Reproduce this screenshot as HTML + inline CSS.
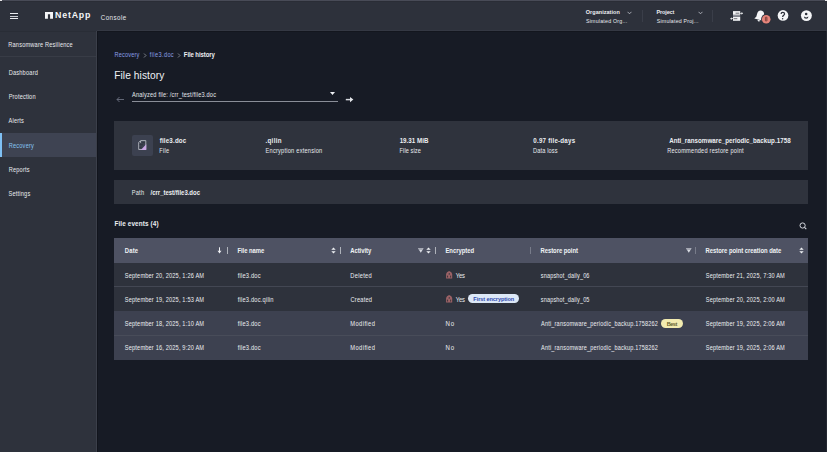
<!DOCTYPE html>
<html><head><meta charset="utf-8">
<style>
*{box-sizing:border-box;margin:0;padding:0}
html,body{width:827px;height:452px;overflow:hidden;background:#171b25;font-family:"Liberation Sans",sans-serif;color:#e6e8ec;position:relative}
.abs{position:absolute}
.t{position:absolute;white-space:nowrap;line-height:1;transform-origin:0 0}
</style></head><body>
<div class="abs" style="left:0px;top:0px;width:827px;height:31px;background:#2d313b;"></div>
<div class="abs" style="left:0px;top:0px;width:827px;height:1px;background:#484b57;"></div>
<div class="abs" style="left:0px;top:1px;width:827px;height:1px;background:#2a2d36;"></div>
<div class="abs" style="left:0px;top:0px;width:2px;height:1px;background:#e6e6e8;"></div>
<div class="abs" style="left:825px;top:0px;width:2px;height:1px;background:#e6e6e8;"></div>
<div class="abs" style="left:0px;top:31px;width:96px;height:421px;background:#2e323c;"></div>
<div class="abs" style="left:0px;top:31px;width:96px;height:1px;background:#292d36;"></div>
<div class="abs" style="left:96px;top:31px;width:1px;height:421px;background:#3b3f4a;"></div>
<div class="abs" style="left:97px;top:30px;width:730px;height:1px;background:#343843;"></div>
<div class="abs" style="left:97px;top:31px;width:1px;height:421px;background:#12151d;"></div>
<div class="abs" style="left:97px;top:31px;width:730px;height:1px;background:#13161e;"></div>
<div class="abs" style="left:826px;top:31px;width:1px;height:421px;background:#232731;"></div>
<div class="abs" style="left:10px;top:13px;width:7.5px;height:1.1px;background:#e8eaee;"></div>
<div class="abs" style="left:10px;top:15.5px;width:7.5px;height:1.0px;background:#c9ccd2;"></div>
<div class="abs" style="left:10px;top:18px;width:7.5px;height:1.1px;background:#e8eaee;"></div>
<svg class="abs" style="left:45px;top:12px" width="8" height="7" viewBox="0 0 8 7"><path d="M0 0H8V6.8H5.1V2.3H2.9V6.8H0Z" fill="#f4f5f7"/></svg>
<svg class="abs" style="left:626.5px;top:10.5px" width="5" height="4" viewBox="0 0 5 4"><path d="M0.5 0.8L2.5 2.8L4.5 0.8" stroke="#c4c8d0" stroke-width="0.8" fill="none"/></svg>
<div class="abs" style="left:642px;top:10px;width:1px;height:12px;background:#3a3e49;"></div>
<svg class="abs" style="left:697.5px;top:10.5px" width="5" height="4" viewBox="0 0 5 4"><path d="M0.5 0.8L2.5 2.8L4.5 0.8" stroke="#c4c8d0" stroke-width="0.8" fill="none"/></svg>
<div class="abs" style="left:712px;top:10px;width:1px;height:12px;background:#3a3e49;"></div>
<svg class="abs" style="left:726px;top:6px" width="20" height="20" viewBox="726 6 20 20">
<rect x="733" y="11.1" width="7.2" height="3.75" fill="#f2f3f5"/>
<rect x="733" y="16.8" width="7.2" height="4" fill="#f2f3f5"/>
<rect x="733" y="14.85" width="7.2" height="1.95" fill="#8d9099"/>
<path d="M735.6 13.2H739.3" stroke="#5d6068" stroke-width="0.9"/>
<path d="M733.7 18.7H737.3" stroke="#5d6068" stroke-width="0.9"/>
<path d="M740.2 12.9H741.5V11.9L743.1 13.3L741.5 14.7V13.7H740.2Z" fill="#f2f3f5"/>
<path d="M733 18.3H731.7V17.3L730.1 18.7L731.7 20.1V19.1H733Z" fill="#f2f3f5"/>
</svg>
<svg class="abs" style="left:750px;top:6px" width="24" height="20" viewBox="750 6 24 20">
<g transform="translate(0.6 0.5) rotate(16 759.5 15.5)"><path d="M759.5 10C757.4 10 756 11.6 756 13.8V17.2L754.6 19.4H764.4L763 17.2V13.8C763 11.6 761.6 10 759.5 10Z" fill="#f4f5f7"/><path d="M758.2 19.9A1.3 1.3 0 0 0 760.8 19.9Z" fill="#f4f5f7"/></g>
<circle cx="766.2" cy="19.2" r="5.1" fill="#2d313b"/>
<circle cx="766.2" cy="19.2" r="4.3" fill="#e5847a"/>
<path d="M765.4 17.2H767V20.9H765.4Z M765.4 19H767" fill="none" stroke="#5e2c2a" stroke-width="0.65"/>
</svg>
<svg class="abs" style="left:774px;top:6px" width="18" height="20" viewBox="774 6 18 20">
<circle cx="783" cy="15.45" r="5.35" fill="#f4f5f7"/>
<path d="M781.1 14.1C781.1 13 781.8 12.4 782.8 12.4C783.9 12.4 784.6 13 784.6 13.9C784.6 15.1 782.6 15.3 782.6 16.9" stroke="#2d313b" stroke-width="1.25" fill="none"/>
<circle cx="782.6" cy="18.8" r="0.75" fill="#2d313b"/>
</svg>
<svg class="abs" style="left:798px;top:6px" width="18" height="20" viewBox="798 6 18 20">
<circle cx="806.4" cy="15.6" r="5.45" fill="#f4f5f7"/>
<circle cx="806.15" cy="14.05" r="1.3" fill="#2d313b"/>
<path d="M803.9 16.6L806.15 17.5L808.4 16.6Q808.5 18.8 806.15 18.8Q803.8 18.8 803.9 16.6Z" fill="#2d313b"/>
</svg>
<div class="abs" style="left:0px;top:56px;width:96px;height:1px;background:#383c46;"></div>
<div class="abs" style="left:0px;top:133px;width:96px;height:24px;background:#3e4352;"></div>
<div class="abs" style="left:0px;top:133px;width:2px;height:24px;background:#7fc0f4;"></div>
<svg class="abs" style="left:143px;top:52.5px" width="4" height="5" viewBox="0 0 4 5"><path d="M1 0.5L3 2.5L1 4.5" stroke="#a6acb6" stroke-width="0.7" fill="none"/></svg>
<svg class="abs" style="left:177px;top:52.5px" width="4" height="5" viewBox="0 0 4 5"><path d="M1 0.5L3 2.5L1 4.5" stroke="#a6acb6" stroke-width="0.7" fill="none"/></svg>
<svg class="abs" style="left:115px;top:96px" width="10" height="7" viewBox="0 0 10 7"><path d="M9 3.5H2M4.5 1L2 3.5L4.5 6" stroke="#6b7180" stroke-width="0.9" fill="none"/></svg>
<div class="abs" style="left:132px;top:101px;width:205.5px;height:1px;background:#8a8e98;"></div>
<svg class="abs" style="left:330px;top:92px" width="5" height="3" viewBox="0 0 5 3"><path d="M0 0H5L2.5 3Z" fill="#eef0f4"/></svg>
<svg class="abs" style="left:344px;top:95px" width="11" height="9" viewBox="344 95 11 9"><path d="M345.8 99.6H350.6" stroke="#d6d9df" stroke-width="1.5"/><path d="M350 96.9L353.4 99.6L350 102.3Z" fill="#e4e6ea"/></svg>
<div class="abs" style="left:114px;top:121px;width:694px;height:49px;background:#2f333d;"></div>
<div class="abs" style="left:132px;top:135px;width:21px;height:21px;background:#3c4150;border-radius:2px;"></div>
<svg class="abs" style="left:136px;top:138px" width="13" height="14" viewBox="136 138 13 14">
<path d="M140.6 140.6H145.8V149.5H138.7V142.5Z" fill="none" stroke="#b6bac2" stroke-width="0.9"/>
<circle cx="140.5" cy="141.9" r="0.65" fill="#e2e5ea"/>
<path d="M142.2 142.7H144.8M139.3 144.7H142.8M139.3 147.3H141.6" stroke="#2a2e3a" stroke-width="0.7"/>
<path d="M146.25 144.2V149.95H140.8Z" fill="#c8a6e4"/>
</svg>
<div class="abs" style="left:114px;top:180px;width:694px;height:24px;background:#2f333d;"></div>
<svg class="abs" style="left:798px;top:221px" width="10" height="10" viewBox="0 0 10 10"><circle cx="4.6" cy="4.5" r="2.6" stroke="#d4d7de" stroke-width="1" fill="none"/><path d="M6.5 6.4L8.3 8.2" stroke="#d4d7de" stroke-width="1.1"/></svg>
<div class="abs" style="left:114px;top:238px;width:694px;height:25px;background:#4e5263;"></div>
<div class="abs" style="left:114px;top:263px;width:694px;height:23px;background:#2e323c;"></div>
<div class="abs" style="left:114px;top:286px;width:694px;height:1px;background:#434753;"></div>
<div class="abs" style="left:114px;top:287px;width:694px;height:24px;background:#2e323c;"></div>
<div class="abs" style="left:114px;top:311px;width:694px;height:24px;background:#3d4150;"></div>
<div class="abs" style="left:114px;top:335px;width:694px;height:1px;background:#484c59;"></div>
<div class="abs" style="left:114px;top:336px;width:694px;height:24px;background:#3d4150;"></div>
<div class="abs" style="left:227px;top:246.5px;width:1px;height:7.5px;background:#aeb2ba;"></div>
<div class="abs" style="left:340px;top:246.5px;width:1px;height:7.5px;background:#aeb2ba;"></div>
<div class="abs" style="left:435px;top:246.5px;width:1px;height:7.5px;background:#aeb2ba;"></div>
<div class="abs" style="left:530px;top:246.5px;width:1px;height:7.5px;background:#787c8a;"></div>
<div class="abs" style="left:695px;top:246.5px;width:1px;height:7.5px;background:#787c8a;"></div>
<svg class="abs" style="left:217px;top:247px" width="5" height="7" viewBox="0 0 5 7"><path d="M2.5 0.3V5" stroke="#f0f2f5" stroke-width="1"/><path d="M0.5 3.8H4.5L2.5 6.6Z" fill="#f0f2f5"/></svg>
<svg class="abs" style="left:330.8px;top:247px" width="5" height="7" viewBox="0 0 5 7"><path d="M0.3 2.8H4.7L2.5 0.4Z M0.3 4.2H4.7L2.5 6.6Z" fill="#f0f2f5"/></svg>
<svg class="abs" style="left:417.5px;top:248px" width="6" height="5" viewBox="0 0 6 5"><path d="M0 0.2H5.6L2.8 4.8Z" fill="#d8dbe2"/><path d="M1 1.2H4.6" stroke="#4e5263" stroke-width="0.5"/></svg>
<svg class="abs" style="left:425.8px;top:247px" width="5" height="7" viewBox="0 0 5 7"><path d="M0.3 2.8H4.7L2.5 0.4Z M0.3 4.2H4.7L2.5 6.6Z" fill="#f0f2f5"/></svg>
<svg class="abs" style="left:685.5px;top:248px" width="6" height="5" viewBox="0 0 6 5"><path d="M0 0.2H5.6L2.8 4.8Z" fill="#d8dbe2"/><path d="M1 1.2H4.6" stroke="#4e5263" stroke-width="0.5"/></svg>
<svg class="abs" style="left:798.8px;top:247px" width="5" height="7" viewBox="0 0 5 7"><path d="M0.3 2.8H4.7L2.5 0.4Z M0.3 4.2H4.7L2.5 6.6Z" fill="#f0f2f5"/></svg>
<svg class="abs" style="left:445px;top:269.5px" width="8" height="9" viewBox="0 0 8 9"><path d="M1.1 4Q1.4 1.9 4.15 0.9Q6.9 1.9 7.2 4V8.6H1.1Z" fill="#9c6266"/><ellipse cx="4.3" cy="3.9" rx="0.8" ry="0.6" fill="#2e323c"/><rect x="2.1" y="5.6" width="1" height="1.9" fill="#3a3238"/><rect x="5.2" y="5.6" width="0.9" height="2" fill="#3a3238"/></svg>
<svg class="abs" style="left:445px;top:293.5px" width="8" height="9" viewBox="0 0 8 9"><path d="M1.1 4Q1.4 1.9 4.15 0.9Q6.9 1.9 7.2 4V8.6H1.1Z" fill="#9c6266"/><ellipse cx="4.3" cy="3.9" rx="0.8" ry="0.6" fill="#2e323c"/><rect x="2.1" y="5.6" width="1" height="1.9" fill="#3a3238"/><rect x="5.2" y="5.6" width="0.9" height="2" fill="#3a3238"/></svg>
<div class="abs" style="left:468.3px;top:294.2px;width:50.6px;height:9.1px;background:#dce8f7;border-radius:4.5px;"></div>
<div class="abs" style="left:661.3px;top:318.65px;width:21.6px;height:9.1px;background:#f2ebb0;border-radius:4.55px;"></div>
<svg class="abs" style="left:0;top:0" width="827" height="452" font-family="Liberation Sans">
<text transform="translate(55.03 18.40) scale(1 1.0)" font-size="8.80" fill="#f4f5f7" font-weight="bold" letter-spacing="0.808">NetApp</text>
<text transform="translate(100.69 19.50) scale(1 1.1770000000000003)" font-size="6.20" fill="#e4e7ec" letter-spacing="0.470">Console</text>
<text transform="translate(585.78 13.80) scale(1 1.1)" font-size="5.50" fill="#eceef2" font-weight="bold" letter-spacing="0.040">Organization</text>
<text transform="translate(585.96 22.70) scale(1 1.1770000000000003)" font-size="5.26" fill="#e8eaef" letter-spacing="0.220">Simulated Org...</text>
<text transform="translate(656.54 13.80) scale(1 1.1)" font-size="5.50" fill="#eceef2" font-weight="bold" letter-spacing="-0.134">Project</text>
<text transform="translate(656.76 22.70) scale(1 1.1770000000000003)" font-size="5.26" fill="#e8eaef" letter-spacing="0.194">Simulated Proj...</text>
<text transform="translate(8.25 46.50) scale(1 1.1770000000000003)" font-size="5.64" fill="#e9ebef" letter-spacing="0.190">Ransomware Resilience</text>
<text transform="translate(8.63 74.90) scale(1 1.1770000000000003)" font-size="5.64" fill="#e9ebef" letter-spacing="0.214">Dashboard</text>
<text transform="translate(8.63 98.90) scale(1 1.1770000000000003)" font-size="5.64" fill="#e9ebef" letter-spacing="0.174">Protection</text>
<text transform="translate(8.60 123.10) scale(1 1.1770000000000003)" font-size="5.64" fill="#e9ebef" letter-spacing="0.181">Alerts</text>
<text transform="translate(8.63 147.80) scale(1 1.1770000000000003)" font-size="5.64" fill="#86c3f2" letter-spacing="0.213">Recovery</text>
<text transform="translate(8.63 172.20) scale(1 1.1770000000000003)" font-size="5.64" fill="#e9ebef" letter-spacing="0.203">Reports</text>
<text transform="translate(8.62 196.10) scale(1 1.1770000000000003)" font-size="5.64" fill="#e9ebef" letter-spacing="0.182">Settings</text>
<text transform="translate(114.55 57.00) scale(1 1.1770000000000003)" font-size="5.64" fill="#8a9fe6" letter-spacing="0.160">Recovery</text>
<text transform="translate(149.82 57.00) scale(1 1.1770000000000003)" font-size="5.64" fill="#8a9fe6" letter-spacing="0.365">file3.doc</text>
<text transform="translate(183.81 57.00) scale(1 1.1)" font-size="6.00" fill="#eef0f4" font-weight="bold" letter-spacing="-0.090">File history</text>
<text transform="translate(114.18 78.60) scale(1 1.1)" font-size="10.20" fill="#f0f2f5" letter-spacing="0.073">File history</text>
<text transform="translate(132.00 96.90) scale(1 1.1770000000000003)" font-size="5.64" fill="#e4e7ec" letter-spacing="0.187">Analyzed file: /crr_test/file3.doc</text>
<text transform="translate(159.71 142.70) scale(1 1.1)" font-size="6.20" fill="#eceef2" font-weight="bold" letter-spacing="0.180">file3.doc</text>
<text transform="translate(159.35 153.00) scale(1 1.1770000000000003)" font-size="5.64" fill="#e9ebef" letter-spacing="0.275">File</text>
<text transform="translate(265.50 142.70) scale(1 1.1)" font-size="6.20" fill="#eceef2" font-weight="bold" letter-spacing="0.306">.qilin</text>
<text transform="translate(265.55 153.00) scale(1 1.1770000000000003)" font-size="5.64" fill="#e9ebef" letter-spacing="0.236">Encryption extension</text>
<text transform="translate(399.63 142.70) scale(1 1.1)" font-size="6.20" fill="#eceef2" font-weight="bold" letter-spacing="0.046">19.31 MiB</text>
<text transform="translate(399.55 153.00) scale(1 1.1770000000000003)" font-size="5.64" fill="#e9ebef" letter-spacing="0.079">File size</text>
<text transform="translate(533.25 142.70) scale(1 1.1)" font-size="6.20" fill="#eceef2" font-weight="bold" letter-spacing="0.235">0.97 file-days</text>
<text transform="translate(533.05 153.00) scale(1 1.1770000000000003)" font-size="5.64" fill="#e9ebef" letter-spacing="0.141">Data loss</text>
<text transform="translate(669.14 142.70) scale(1 1.1)" font-size="6.20" fill="#eceef2" font-weight="bold" letter-spacing="0.043">Anti_ransomware_periodic_backup.1758</text>
<text transform="translate(667.15 153.00) scale(1 1.1770000000000003)" font-size="5.64" fill="#e9ebef" letter-spacing="0.230">Recommended restore point</text>
<text transform="translate(131.65 194.80) scale(1 1.1770000000000003)" font-size="5.64" fill="#e9ebef" letter-spacing="0.276">Path</text>
<text transform="translate(150.54 194.80) scale(1 1.1)" font-size="6.00" fill="#eceef2" font-weight="bold" letter-spacing="-0.008">/crr_test/file3.doc</text>
<text transform="translate(114.48 226.00) scale(1 1.1)" font-size="6.40" fill="#eceef2" font-weight="bold" letter-spacing="0.103">File events (4)</text>
<text transform="translate(124.82 253.10) scale(1 1.1)" font-size="5.90" fill="#f0f2f5" font-weight="bold" letter-spacing="0.172">Date</text>
<text transform="translate(237.52 253.10) scale(1 1.1)" font-size="5.90" fill="#f0f2f5" font-weight="bold" letter-spacing="-0.064">File name</text>
<text transform="translate(350.25 253.10) scale(1 1.1)" font-size="5.90" fill="#f0f2f5" font-weight="bold" letter-spacing="-0.046">Activity</text>
<text transform="translate(445.42 253.10) scale(1 1.1)" font-size="5.90" fill="#f0f2f5" font-weight="bold" letter-spacing="-0.023">Encrypted</text>
<text transform="translate(540.42 253.10) scale(1 1.1)" font-size="5.90" fill="#f0f2f5" font-weight="bold" letter-spacing="-0.029">Restore point</text>
<text transform="translate(705.62 253.10) scale(1 1.1)" font-size="5.90" fill="#f0f2f5" font-weight="bold" letter-spacing="-0.026">Restore point creation date</text>
<text transform="translate(124.85 277.50) scale(1 1.1770000000000003)" font-size="5.64" fill="#eceef1" letter-spacing="0.172">September 20, 2025, 1:26 AM</text>
<text transform="translate(237.71 277.50) scale(1 1.1770000000000003)" font-size="5.73" fill="#eceef1" letter-spacing="0.184">file3.doc</text>
<text transform="translate(350.34 277.50) scale(1 1.1770000000000003)" font-size="5.73" fill="#eceef1" letter-spacing="0.263">Deleted</text>
<text transform="translate(455.75 277.50) scale(1 1.1770000000000003)" font-size="5.83" fill="#eceef1" letter-spacing="-0.125">Yes</text>
<text transform="translate(540.83 277.50) scale(1 1.1770000000000003)" font-size="5.55" fill="#eceef1" letter-spacing="0.152">snapshot_daily_06</text>
<text transform="translate(705.75 277.50) scale(1 1.1770000000000003)" font-size="5.64" fill="#eceef1" letter-spacing="0.165">September 21, 2025, 7:30 AM</text>
<text transform="translate(124.85 301.50) scale(1 1.1770000000000003)" font-size="5.64" fill="#eceef1" letter-spacing="0.172">September 19, 2025, 1:53 AM</text>
<text transform="translate(237.71 301.50) scale(1 1.1770000000000003)" font-size="5.73" fill="#eceef1" letter-spacing="0.194">file3.doc.qilin</text>
<text transform="translate(350.51 301.50) scale(1 1.1770000000000003)" font-size="5.73" fill="#eceef1" letter-spacing="0.179">Created</text>
<text transform="translate(455.75 301.50) scale(1 1.1770000000000003)" font-size="5.83" fill="#eceef1" letter-spacing="-0.125">Yes</text>
<text transform="translate(473.34 301.10) scale(1 1.1)" font-size="5.60" fill="#2f4aae" font-weight="bold" letter-spacing="-0.087">First encryption</text>
<text transform="translate(540.83 301.50) scale(1 1.1770000000000003)" font-size="5.55" fill="#eceef1" letter-spacing="0.152">snapshot_daily_05</text>
<text transform="translate(705.75 301.50) scale(1 1.1770000000000003)" font-size="5.64" fill="#eceef1" letter-spacing="0.165">September 20, 2025, 2:00 AM</text>
<text transform="translate(124.85 326.00) scale(1 1.1770000000000003)" font-size="5.64" fill="#eceef1" letter-spacing="0.172">September 18, 2025, 1:10 AM</text>
<text transform="translate(237.71 326.00) scale(1 1.1770000000000003)" font-size="5.73" fill="#eceef1" letter-spacing="0.184">file3.doc</text>
<text transform="translate(350.34 326.00) scale(1 1.1770000000000003)" font-size="5.73" fill="#eceef1" letter-spacing="0.408">Modified</text>
<text transform="translate(445.41 326.00) scale(1 1.0914000000000001)" font-size="6.11" fill="#eceef1" letter-spacing="0.943">No</text>
<text transform="translate(541.00 326.00) scale(1 1.1770000000000003)" font-size="5.55" fill="#eceef1" letter-spacing="0.193">Anti_ransomware_periodic_backup.1758262</text>
<text transform="translate(666.64 325.50) scale(1 1.1)" font-size="5.60" fill="#66602e" font-weight="bold" letter-spacing="-0.501">Best</text>
<text transform="translate(705.75 326.00) scale(1 1.1770000000000003)" font-size="5.64" fill="#eceef1" letter-spacing="0.165">September 19, 2025, 2:06 AM</text>
<text transform="translate(124.85 350.00) scale(1 1.1770000000000003)" font-size="5.64" fill="#eceef1" letter-spacing="0.172">September 16, 2025, 9:20 AM</text>
<text transform="translate(237.71 350.00) scale(1 1.1770000000000003)" font-size="5.73" fill="#eceef1" letter-spacing="0.184">file3.doc</text>
<text transform="translate(350.34 350.00) scale(1 1.1770000000000003)" font-size="5.73" fill="#eceef1" letter-spacing="0.408">Modified</text>
<text transform="translate(445.41 350.00) scale(1 1.0914000000000001)" font-size="6.11" fill="#eceef1" letter-spacing="0.943">No</text>
<text transform="translate(541.00 350.00) scale(1 1.1770000000000003)" font-size="5.55" fill="#eceef1" letter-spacing="0.193">Anti_ransomware_periodic_backup.1758262</text>
<text transform="translate(705.75 350.00) scale(1 1.1770000000000003)" font-size="5.64" fill="#eceef1" letter-spacing="0.165">September 19, 2025, 2:06 AM</text>
</svg>
</body></html>
